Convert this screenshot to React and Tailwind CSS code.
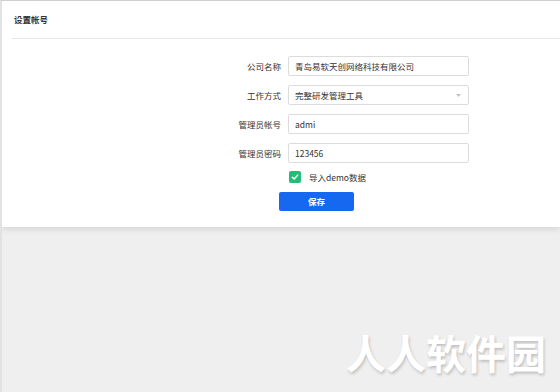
const fields = [
  { label: '公司名称', value: '青岛易软天创网络科技有限公司' },
  { label: '工作方式', value: '完整研发管理工具', select: true },
  { label: '管理员帐号', value: 'admi' },
  { label: '管理员密码', value: '123456' },
];

export default function App() {
  return (
    <div
      className="relative w-full h-[392px] bg-[#efefef] border-t border-[#cfcfcf] border-l-2 border-l-[#e2e2e2] overflow-hidden text-[#333]"
      style={{ fontFamily: '"Noto Sans CJK SC", "Noto Sans", sans-serif' }}
    >
      {/* card */}
      <div className="bg-white h-[226px] shadow-[0_2px_6px_rgba(0,0,0,0.12)]">
        <div className="ml-[10px] h-[38px] flex items-center pl-[2px] border-b border-[#e8e8e8]">
          <span className="text-[8.5px] font-bold text-[#333]">设置帐号</span>
        </div>

        <div className="pt-[17px] pl-[179px] flex flex-col gap-[9px]">
          {fields.map((f) => (
            <div key={f.label} className="flex items-center gap-[7px]">
              <span className="w-[100px] text-right text-[8.5px] text-[#333]">{f.label}</span>
              <div className="relative w-[181px] h-[20px] border border-[#dcdcdc] rounded-[2px] flex items-center px-[6px] text-[8.5px] text-[#333]">
                {f.value}
                {f.select && (
                  <svg className="absolute right-[7px] top-[8px]" width="5" height="3" viewBox="0 0 5 3">
                    <path d="M0 0 L5 0 L2.5 3 Z" fill="#c0c0c0" />
                  </svg>
                )}
              </div>
            </div>
          ))}

          <div className="flex items-center pl-[108px] -mt-[1px]">
            <span className="w-[12px] h-[12px] rounded-[2px] bg-[#1fbf75] flex items-center justify-center">
              <svg width="8" height="8" viewBox="0 0 8 8">
                <path d="M1.3 4.2 L3.2 6 L6.8 2" fill="none" stroke="white" strokeWidth="1.5" strokeLinecap="round" strokeLinejoin="round" />
              </svg>
            </span>
            <span className="ml-[8px] text-[8.5px] text-[#333]">导入demo数据</span>
          </div>

          <div className="pl-[98px] -mt-[1px]">
            <button className="w-[75px] h-[19px] rounded-[2px] bg-[#1668f0] text-white text-[8.5px] font-bold flex items-center justify-center">
              保存
            </button>
          </div>
        </div>
      </div>

      {/* watermark */}
      <div
        className="absolute left-[344px] top-[331px] text-[40px] font-bold text-white leading-none"
        style={{ textShadow: '1px 2px 3px rgba(0,0,0,0.2)' }}
      >
        人人软件园
      </div>
    </div>
  );
}
